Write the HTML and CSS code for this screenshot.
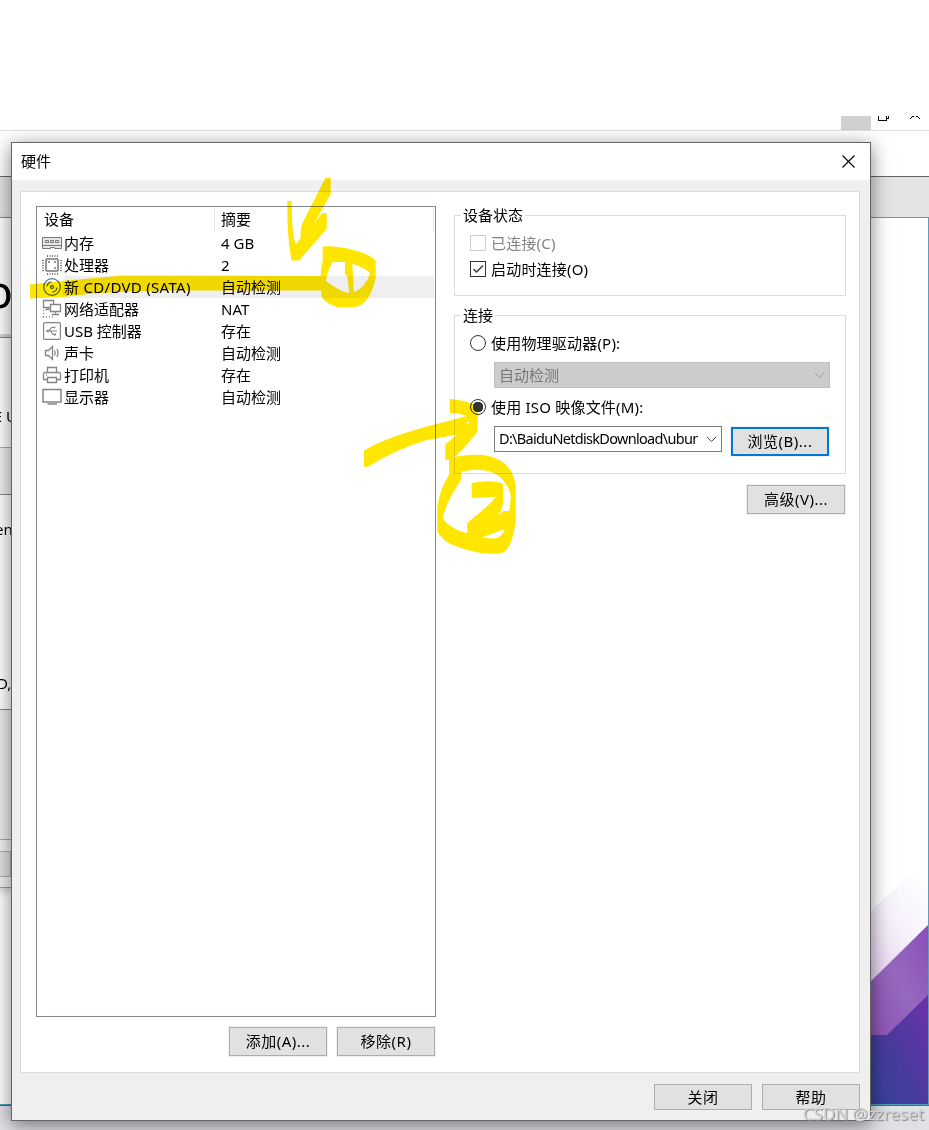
FILE: index.html
```
<!DOCTYPE html>
<html lang="zh-CN">
<head>
    <meta charset="UTF-8">
    <title>硬件</title>
    <link rel="stylesheet" href="styles.css">
</head>
<body>

<div class="desktop">
    <!-- main window behind the dialog -->
    <div class="back-caption">
        <span class="back-min"></span>
        <svg class="back-icons" width="59" height="14" viewBox="0 0 59 14" fill="none" stroke="#000" shape-rendering="crispEdges">
            <path d="M8.500 0V4.500H16.500V0M18.500 0V2.500H16.500"/>
            <path d="M40 2.500h1M41 1.500h1M42 .5h2M46 .5h2M48 1.500h1M49 2.500h1"/>
        </svg>
    </div>
    <div class="back-toolbar"></div>
    <div class="back-page">
        <svg class="art" width="57" height="250" viewBox="871 854 57 250">
            <defs>
                <linearGradient id="haze" x1="0" y1="1" x2=".7" y2="0">
                    <stop offset="0" stop-color="#e4d0ed"/>
                    <stop offset=".5" stop-color="#f5f0fa"/>
                    <stop offset="1" stop-color="#fff"/>
                </linearGradient>
                <linearGradient id="violet" x1="0" y1="1" x2="1" y2="0">
                    <stop offset="0" stop-color="#8d53b3"/>
                    <stop offset=".5" stop-color="#9569bf"/>
                    <stop offset="1" stop-color="#8a4db6"/>
                </linearGradient>
                <linearGradient id="indigo" x1="0" y1="1" x2="1" y2="0">
                    <stop offset="0" stop-color="#34429a"/>
                    <stop offset=".5" stop-color="#4c3a9f"/>
                    <stop offset="1" stop-color="#6d32a8"/>
                </linearGradient>
            </defs>
            <path fill="url(#haze)" d="M871 911L928 857V925L871 981Z"/>
            <path fill="url(#indigo)" d="M871 1034H887L928 994V1104H871Z"/>
            <path fill="url(#violet)" d="M871 981L928 925V995L887 1035H871Z"/>
        </svg>
    </div>
    <div class="back-status"></div>

    <!-- wizard window, only its right edge is visible -->
    <div class="wizard">
        <div class="wizard-head"><span>O</span></div>
        <div class="wizard-text"><span>E U</span></div>
        <div class="wizard-bar"></div>
        <div class="wizard-body"><span class="w-en">en</span><span class="w-d">D,</span></div>
        <div class="wizard-gray"></div>
        <div class="wizard-foot"><i></i></div>
    </div>

    <div class="dialog">
        <div class="titlebar">
            <span>硬件</span>
            <svg width="13" height="13" viewBox="0 0 13 13" stroke="#000" stroke-width="1.100"><path d="M.5 .5L12.500 12.500M12.500 .5L.5 12.500"/></svg>
        </div>
        <div class="panel">
            <div class="left">
                <div class="list">
                    <div class="list-head"><span>设备</span><span>摘要</span></div>
                    <div class="row">
                        <svg viewBox="0 0 20 20" fill="none" stroke="#777"><path d="M.5 4.500h19v11h-7v-1h-4v1h-8z" fill="#e6e6e6"/><path d="M1 12.500h18" /><path d="M3.500 7.500h3v2h-3zM8.500 7.500h3v2h-3zM13.500 7.500h3v2h-3z"/></svg>
                        <b>内存</b><span>4 GB</span>
                    </div>
                    <div class="row">
                        <svg viewBox="0 0 20 20" fill="none" stroke="#777"><rect x="4" y="4" width="12" height="12" rx="1" stroke-width="1.500"/><path d="M5 1h11M5 19h11M1 5v11M19 5v11" stroke-width="2" stroke-dasharray="1 1.500"/><path d="M6 7h2M12 7h2M12 13h2" stroke-width="1.500"/></svg>
                        <b>处理器</b><span>2</span>
                    </div>
                    <div class="row selected">
                        <svg viewBox="0 0 20 20" fill="none" stroke="#52749a" stroke-width="1.300"><circle cx="10" cy="10" r="8.300"/><circle cx="10" cy="10" r="1.500"/><path d="M5 9.500A5 5 0 0 1 9.500 5M15 10.500A5 5 0 0 1 10.500 15"/></svg>
                        <b class="wide">新 CD/DVD (SATA)</b><span>自动检测</span>
                    </div>
                    <div class="row">
                        <svg viewBox="0 0 20 20" fill="none" stroke="#858585" stroke-width="1.300"><path d="M1.500 1.500h10v7h-10zM6 8.500v2M3.500 10.500h4"/><path d="M8.500 5.500h10v7h-10z" fill="#fff"/><path d="M13.500 12.500v2M10 15.500h7"/><path d="M1.500 11v7M1 18h12" stroke-dasharray="1 2"/></svg>
                        <b>网络适配器</b><span>NAT</span>
                    </div>
                    <div class="row">
                        <svg viewBox="0 0 20 20" fill="none" stroke="#858585" stroke-width="1.200"><rect x="1.600" y="1.600" width="16.800" height="16.800" rx="1.500"/><path d="M5 10h10M7 10l2.500-3.500H12M8.500 10l2.500 3.500h2"/><path d="M3.500 10l3-1.800v3.600z" fill="#858585" stroke="none"/><circle cx="12.500" cy="6.500" r="1" fill="#858585" stroke="none"/><path d="M12 12.500h2v2h-2z" fill="#858585" stroke="none"/></svg>
                        <b>USB 控制器</b><span>存在</span>
                    </div>
                    <div class="row">
                        <svg viewBox="0 0 20 20" fill="none" stroke="#858585" stroke-width="1.300"><path d="M3.500 7.500h3l4-4v13l-4-4h-3z"/><path d="M12.500 7.500q1.500 2.500 0 5M14.800 6q2.600 4 0 8"/></svg>
                        <b>声卡</b><span>自动检测</span>
                    </div>
                    <div class="row">
                        <svg viewBox="0 0 20 20" fill="none" stroke="#858585" stroke-width="1.300"><path d="M5.500 7V2.500h9V7M5.500 14.500h-4v-6l1-1h15l1 1v6h-4M5.500 12.500h9v5h-9zM4 9.800h1"/></svg>
                        <b>打印机</b><span>存在</span>
                    </div>
                    <div class="row">
                        <svg viewBox="0 0 20 20" fill="none" stroke="#858585" stroke-width="1.500"><path d="M1 2.500h18v12.500H1zM5.500 17h9.500"/></svg>
                        <b>显示器</b><span>自动检测</span>
                    </div>
                </div>
                <div class="buttons">
                    <button>添加(A)...</button>
                    <button>移除(R)</button>
                </div>
            </div>

            <div class="right">
                <div class="group state">
                    <span class="legend">设备状态</span>
                    <div class="opt disabled"><i class="check"></i>已连接(C)</div>
                    <div class="opt"><i class="check"><svg width="14" height="14" viewBox="0 0 14 14" fill="none" stroke="#333" stroke-width="1.400"><path d="M2.500 7L5.500 10L12 3.500"/></svg></i>启动时连接(O)</div>
                </div>
                <div class="group conn">
                    <span class="legend">连接</span>
                    <div class="opt"><i class="radio"></i>使用物理驱动器(P):</div>
                    <div class="combo off"><span>自动检测</span><svg width="11" height="7" viewBox="0 0 11 7" fill="none" stroke="#999"><path d="M1 1L5.500 5.500L10 1"/></svg></div>
                    <div class="opt"><i class="radio on"></i>使用 ISO 映像文件(M):</div>
                    <div class="file">
                        <div class="combo path"><span>D:\BaiduNetdiskDownload\ubuntu</span><svg width="11" height="7" viewBox="0 0 11 7" fill="none" stroke="#444"><path d="M1 1L5.500 5.500L10 1"/></svg></div>
                        <button class="focus">浏览(B)...</button>
                    </div>
                </div>
                <button class="advanced">高级(V)...</button>
            </div>
        </div>
        <div class="footer">
            <button>关闭</button>
            <button>帮助</button>
        </div>
    </div>

    <!-- highlighter marks -->
    <svg class="marker" width="929" height="1130" viewBox="0 0 929 1130" fill="#ffe600" fill-rule="evenodd">
        <path d="M30 284.500L62 281L123 275.500L322 276V290.500H170Q110 290.500 62 297L30 298.500Z"/>
        <path d="M287.300 201H291.700Q291.500 236 296 244L300.700 238Q300 228 303 222L325.700 177.500H330.700V194L313.500 224.500L322 213H326.700V229L299 260.500H291.700Q287 240 287.300 201Z"/>
        <path d="M322.700 246.500Q336 245.500 353 250Q370 254 375.700 261V278Q370 305 354 307.300H338Q326 304 321.700 297Q319 276 322.700 260ZM332.700 262H345V274.500L347.300 276L349.300 293Q338 291 326 280.700Q327 272 332.700 262ZM352.300 263.700Q366 268 370 273.300Q366 287 354 292.300Z"/>
        <path d="M364 450.700Q382 439 427 426.500L467 416Q459 413 449.700 413V399Q458 399 473.500 404L478 412L477.300 431.700Q462 452 450 460H445.300V444.500L457 434.500L427 440Q396 449 368 466.700H364ZM466 422.500L469 421.500L468.500 424Z"/>
        <path d="M449 458.500Q463 454 483 455Q513 459 515.700 487V520Q512 553 499 553.500Q477 555 453 545Q443 541 437.300 531.700V508Q439 491 449.300 474ZM461 471.700Q487 466 500 477Q510 487 511 497L509.300 511H503.500L498 515.500Q502 510 503 503V484Q493 479 471.700 483V498L495.700 496.700Q490 505 467.300 522.700V533.300Q450 529 442.700 518.500Q445 504 461 480ZM481 537.700L505 529Q501 538 495 538.500Z"/>
    </svg>

    <div class="watermark">CSDN @zzreset</div>
</div>

</body>
</html>
```

FILE: styles.css
```
* {
    box-sizing: border-box;
}

body {
    margin: 0;
    font-family: "Noto Sans", "Noto Sans CJK SC", sans-serif;
    font-size: 15px;
    line-height: 22px;
    color: #000;
}

.desktop {
    position: relative;
    width: 929px;
    height: 1130px;
    overflow: hidden;
    background: #fff;
    isolation: isolate;
}

/* main window */
.back-caption {
    display: flex;
    justify-content: flex-end;
    height: 131px;
    padding-top: 116px;
    border-bottom: 1px solid #e0e0e0;
}

.back-min {
    width: 30px;
    height: 14px;
    background: #d1d1d1;
}

.back-icons {
    margin-left: -1px;
}

.back-toolbar {
    height: 87px;
    border-top: 45px solid #fff;
    border-bottom: 1px solid #5f9cc0;
    background: linear-gradient(#666 1px, #e2e4e6 1px);
}

.back-page {
    display: flex;
    align-items: flex-end;
    justify-content: flex-end;
    height: 887px;
    border-right: 1px solid #5f9cc0;
    border-bottom: 1px solid #4f9cb8;
}

.art {
    display: block;
}

.back-status {
    height: 25px;
    border-top: 1px solid #666;
    background: #dfe1e4;
}

/* wizard */
.wizard {
    position: absolute;
    left: 0;
    top: 218px;
    width: 12px;
    height: 670px;
    overflow: hidden;
    border-bottom: 1px solid #999;
    background: #fff;
    box-shadow: 0 3px 8px rgba(0, 0, 0, .25);
    white-space: nowrap;
}

.wizard-head {
    display: flex;
    justify-content: flex-end;
    height: 120px;
    padding: 58px 0 0;
    border-bottom: 1px solid #888;
    background: linear-gradient(#fff 116px, #d5d5d5 116px);
    font-size: 33px;
    line-height: 40px;
    -webkit-text-stroke: 1px #000;
}

.wizard-text {
    display: flex;
    justify-content: flex-end;
    height: 109px;
    padding: 67px 0 0;
}

.wizard-text span {
    margin-right: -5px;
}

.wizard-bar {
    height: 48px;
    border-top: 1px solid #aaa;
    border-bottom: 1px solid #828790;
    background: #eee;
}

.wizard-body {
    display: flex;
    flex-direction: column;
    height: 214px;
    padding-top: 23px;
}

.w-en {
    margin-left: -5px;
}

.w-d {
    margin: 132px 0 0 -3px;
}

.wizard-gray {
    height: 131px;
    border-top: 1px solid #828790;
    border-bottom: 1px solid #aaa;
    background: #ececec;
}

.wizard-foot {
    height: 48px;
    padding-top: 11px;
    background: #f0f0f0;
}

.wizard-foot i {
    display: block;
    width: 11px;
    height: 26px;
    border: 1px solid #adadad;
    border-left: none;
    background: #e1e1e1;
}

/* dialog */
.dialog {
    position: absolute;
    left: 11px;
    top: 142px;
    width: 860px;
    height: 979px;
    border: 1px solid #666;
    background: #efefef;
    box-shadow: 0 4px 18px rgba(0, 0, 0, .5);
}

.titlebar {
    display: flex;
    align-items: center;
    justify-content: space-between;
    height: 37px;
    padding: 0 15px 1px 9px;
    background: #fff;
}

.panel {
    display: flex;
    height: 882px;
    margin: 11px 10px 0 8px;
    padding: 14px 13px 0 15px;
    border: 1px solid #dcdcdc;
    background: #fff;
}

.left {
    width: 400px;
}

.list {
    height: 811px;
    padding: 1px;
    border: 1px solid #828790;
}

.list-head {
    display: flex;
    height: 24px;
    line-height: 23px;
    border-right: 1px solid #e5e5e5;
}

.list-head span:first-child {
    width: 177px;
    padding-left: 6px;
    border-right: 1px solid #e5e5e5;
}

.list-head span:last-child {
    padding-left: 6px;
}

.row {
    display: flex;
    align-items: center;
    height: 22px;
    padding-left: 4px;
}

.row svg {
    flex: none;
    width: 20px;
    height: 20px;
}

.row b {
    width: 159px;
    padding-left: 2px;
    font-weight: normal;
    white-space: nowrap;
}

.row .wide {
    letter-spacing: .3px;
}

.row span {
    flex: 1;
}

.selected {
    background: linear-gradient(to right, transparent 25px, #efefef 25px);
}

.buttons {
    display: flex;
    gap: 10px;
    justify-content: flex-end;
    margin: 10px 1px 0 0;
}

button {
    width: 98px;
    height: 29px;
    padding: 0 0 2px;
    border: 1px solid #adadad;
    background: #e1e1e1;
    color: #000;
    font: inherit;
    letter-spacing: .5px;
    outline: 1px solid #f0f0f0;
}

.focus {
    border: 2px solid #0078d7;
}

.right {
    width: 392px;
    margin-left: 18px;
    padding-top: 9px;
}

.group {
    border: 1px solid #dcdcdc;
}

.legend {
    display: block;
    width: max-content;
    height: 22px;
    margin: -12px 0 0 6px;
    padding: 0 2px;
    background: #fff;
}

.state {
    height: 81px;
}

.conn {
    height: 159px;
    margin-top: 19px;
}

.opt {
    display: flex;
    align-items: center;
    gap: 5px;
    height: 22px;
    padding-left: 15px;
    letter-spacing: .2px;
}

.state .opt {
    margin-top: 6px;
}

.state .opt + .opt {
    margin-top: 4px;
}

.conn .opt {
    margin-top: 6px;
}

.disabled {
    color: #838383;
}

.check {
    width: 16px;
    height: 16px;
    border: 1px solid #333;
}

.check svg {
    display: block;
}

.disabled .check {
    border-color: #ccc;
}

.radio {
    width: 16px;
    height: 16px;
    border: 1px solid #333;
    border-radius: 50%;
    background: #fff;
}

.radio.on {
    background: radial-gradient(circle, #333 5px, #fff 5.5px);
}

.combo {
    display: flex;
    align-items: center;
    width: 228px;
    height: 26px;
    padding: 0 4px;
    border: 1px solid #7a7a7a;
    background: #fff;
}

.combo span {
    flex: 1;
    overflow: hidden;
    margin-right: 8px;
    white-space: nowrap;
}

.path span {
    margin-top: -2px;
    font-size: 14.5px;
    letter-spacing: -.7px;
}

.combo.off {
    width: 336px;
    margin: 8px 0 0 39px;
    border-color: #bfbfbf;
    background: #ccc;
    color: #777;
}

.conn .off + .opt {
    margin-top: 8px;
}

.file {
    display: flex;
    gap: 9px;
    margin: 8px 0 0 39px;
}

.file button {
    margin-top: 1px;
}

.advanced {
    display: block;
    margin: 11px 1px 0 auto;
}

.footer {
    display: flex;
    gap: 10px;
    justify-content: flex-end;
    padding: 11px 10px 0 0;
}

.footer button {
    height: 26px;
    padding: 0;
}

/* overlays */
.marker {
    position: absolute;
    left: 0;
    top: 0;
    mix-blend-mode: multiply;
}

.watermark {
    position: absolute;
    right: 5px;
    bottom: 5px;
    color: #d2d2d6;
    font-size: 17px;
    text-shadow: 1px 1px 1px #888;
}
```
